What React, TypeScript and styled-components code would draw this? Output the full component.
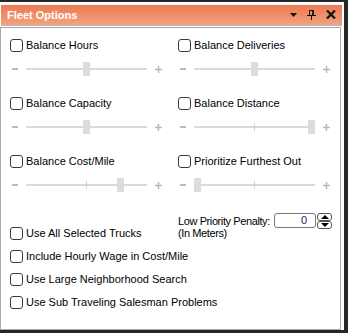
import React from 'react';
import styled, { createGlobalStyle } from 'styled-components';

interface SliderOption {
  label: string;
  value: number;
}

const sliderOptions: SliderOption[] = [
  { label: 'Balance Hours', value: 0.5 },
  { label: 'Balance Deliveries', value: 0.5 },
  { label: 'Balance Capacity', value: 0.5 },
  { label: 'Balance Distance', value: 1 },
  { label: 'Balance Cost/Mile', value: 0.8 },
  { label: 'Prioritize Furthest Out', value: 0 },
];

const flagOptions = [
  'Use All Selected Trucks',
  'Include Hourly Wage in Cost/Mile',
  'Use Large Neighborhood Search',
  'Use Sub Traveling Salesman Problems',
];

export default function App() {
  return (
    <>
      <GlobalStyle />
      <Frame>
        <TitleBar>
          <Title>Fleet Options</Title>
          <TitleControls>
            <svg width="7" height="4" viewBox="0 0 7 4">
              <path d="M0 0h7L3.5 4z" fill="#111" />
            </svg>
            <svg width="9" height="10" viewBox="0 0 9 10">
              <path d="M2.5 0.5h4v5M2.5 0.5v5M0 5.5h9M4.5 5.5V10" stroke="#111" strokeWidth="1" fill="none" />
              <path d="M6 0.5v5" stroke="#111" strokeWidth="1.6" />
            </svg>
            <svg width="10" height="9" viewBox="0 0 10 9">
              <path d="M1 0.5l8 8M9 0.5l-8 8" stroke="#111" strokeWidth="2.2" />
            </svg>
          </TitleControls>
        </TitleBar>
        <Panel>
          <SliderGrid>
            {sliderOptions.map((opt) => (
              <SliderGroup key={opt.label}>
                <CheckRow>
                  <Box />
                  <Label>{opt.label}</Label>
                </CheckRow>
                <SliderRow>
                  <Step>
                    <svg width="6" height="2" viewBox="0 0 6 2">
                      <rect width="6" height="2" fill="#b9b9b9" />
                    </svg>
                  </Step>
                  <Track>
                    <Tick />
                    <Thumb $value={opt.value} />
                  </Track>
                  <Plus>
                    <svg width="7" height="7" viewBox="0 0 7 7">
                      <path d="M0 3.5h7M3.5 0v7" stroke="#b9b9b9" strokeWidth="1.5" />
                    </svg>
                  </Plus>
                </SliderRow>
              </SliderGroup>
            ))}
          </SliderGrid>
          <Bottom>
            <FlagList>
              {flagOptions.map((f) => (
                <CheckRow key={f}>
                  <Box />
                  <Label>{f}</Label>
                </CheckRow>
              ))}
            </FlagList>
            <Penalty>
              <PenaltyLabel>
                Low Priority Penalty:
                <br />
                (In Meters)
              </PenaltyLabel>
              <NumberBox>0</NumberBox>
              <Spinner>
                <SpinButton>
                  <svg width="8" height="4" viewBox="0 0 8 4">
                    <path d="M0 4h8L4 0z" fill="#000" />
                  </svg>
                </SpinButton>
                <SpinButton>
                  <svg width="8" height="4" viewBox="0 0 8 4">
                    <path d="M0 0h8L4 4z" fill="#000" />
                  </svg>
                </SpinButton>
              </Spinner>
            </Penalty>
          </Bottom>
        </Panel>
      </Frame>
    </>
  );
}

const GlobalStyle = createGlobalStyle`
  html, body {
    margin: 0;
    padding: 0;
    background: #262626;
  }
  body {
    font-family: "Liberation Sans", Arial, sans-serif;
    font-size: 11px;
    color: #000;
  }
`;

const Frame = styled.div`
  box-sizing: border-box;
  display: flex;
  flex-direction: column;
  width: 344px;
  height: 328px;
  margin-top: 2px;
  padding-top: 3px;
  background: #fff;
`;

const TitleBar = styled.div`
  box-sizing: border-box;
  display: flex;
  align-items: center;
  height: 21px;
  margin: 0 2px 0 1px;
  padding: 0 6px 1px 6px;
  background: linear-gradient(#ec7a52, #f2a27f);
  border-bottom: 1px solid #b8b8b8;
`;

const Title = styled.span`
  font-weight: bold;
  font-size: 11px;
  color: #fff;
`;

const TitleControls = styled.div`
  display: flex;
  align-items: center;
  gap: 10px;
  margin-left: auto;

  svg {
    display: block;
  }
`;

const Panel = styled.div`
  box-sizing: border-box;
  flex: 1;
  margin: 1px 3px 0 0;
  padding: 11px 0 0 9px;
  border: 1px solid #a8a8a8;
`;

const SliderGrid = styled.div`
  display: grid;
  grid-template-columns: 168px 168px;
  row-gap: 21px;
`;

const SliderGroup = styled.div`
  display: flex;
  flex-direction: column;
`;

const CheckRow = styled.label`
  display: flex;
  align-items: center;
  height: 13px;
  white-space: nowrap;
`;

const Box = styled.span`
  box-sizing: border-box;
  flex: none;
  width: 13px;
  height: 13px;
  border: 1px solid #3c3c3c;
  border-radius: 3px;
  background: #fff;
`;

const Label = styled.span`
  margin-left: 3px;
  line-height: 13px;
`;

const SliderRow = styled.div`
  display: flex;
  align-items: center;
  height: 14px;
  margin-top: 10px;
`;

const Step = styled.span`
  box-sizing: border-box;
  display: flex;
  width: 16px;
  padding-left: 2px;
`;

const Track = styled.div`
  position: relative;
  width: 121px;
  height: 2px;
  background: #dadada;
`;

const Tick = styled.span`
  position: absolute;
  left: 60px;
  top: -3px;
  width: 1px;
  height: 8px;
  background: #d4d4d4;
`;

const Thumb = styled.span<{ $value: number }>`
  position: absolute;
  top: -6px;
  left: calc(${({ $value }) => $value} * (100% - 7px));
  width: 7px;
  height: 14px;
  background: #dcdcdc;
`;

const Plus = styled.span`
  display: flex;
  margin-left: 8px;
`;

const Bottom = styled.div`
  display: grid;
  grid-template-columns: 168px 1fr;
  margin-top: 21px;
`;

const FlagList = styled.div`
  display: flex;
  flex-direction: column;
  gap: 10px;
  margin-top: 14px;
`;

const Penalty = styled.div`
  display: flex;
  align-items: flex-start;
`;

const PenaltyLabel = styled.span`
  width: 96px;
  margin-top: 2px;
  line-height: 12px;
  letter-spacing: -0.4px;
  white-space: nowrap;
`;

const NumberBox = styled.div`
  box-sizing: border-box;
  width: 42px;
  height: 15px;
  padding-right: 8px;
  border: 1px solid #777;
  border-radius: 3px;
  text-align: right;
  line-height: 13px;
  color: #1c2466;
`;

const Spinner = styled.div`
  display: flex;
  flex-direction: column;
  margin-left: 1px;
`;

const SpinButton = styled.div`
  box-sizing: border-box;
  display: flex;
  align-items: center;
  justify-content: center;
  width: 15px;
  height: 8px;
  border: 1px solid #555;
  border-radius: 3px;
  background: #fff;
`;
